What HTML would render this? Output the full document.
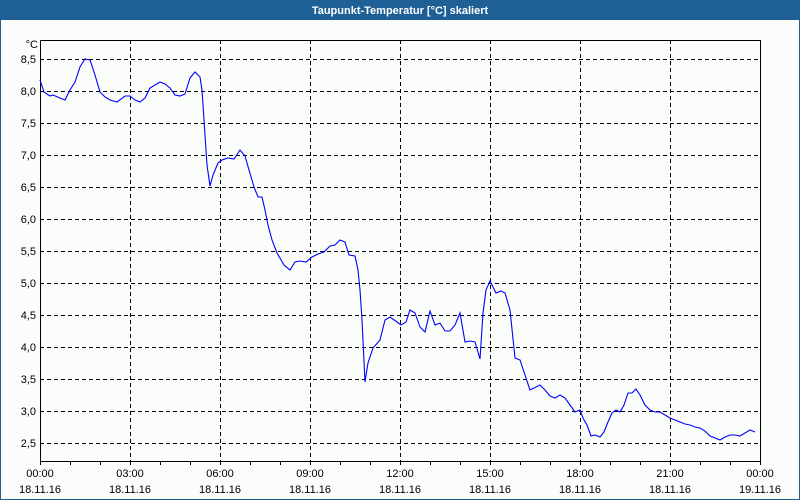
<!DOCTYPE html>
<html><head><meta charset="utf-8"><style>
html,body{margin:0;padding:0;width:800px;height:500px;overflow:hidden;background:#fff}
</style></head><body>
<svg width="800" height="500" xmlns="http://www.w3.org/2000/svg" font-family="Liberation Sans, sans-serif" font-size="11">
<rect x="0" y="0" width="800" height="500" fill="#1e6096"/>
<rect x="1" y="20" width="798" height="479" fill="#fafdfa"/>
<text x="400" y="14" fill="#fff" font-weight="bold" text-anchor="middle">Taupunkt-Temperatur [°C] skaliert</text>
<g stroke="#000" stroke-width="1" stroke-dasharray="4,3" shape-rendering="crispEdges">
<line x1="40" y1="59.5" x2="760" y2="59.5"/><line x1="40" y1="91.5" x2="760" y2="91.5"/>
<line x1="40" y1="123.5" x2="760" y2="123.5"/><line x1="40" y1="155.5" x2="760" y2="155.5"/>
<line x1="40" y1="187.5" x2="760" y2="187.5"/><line x1="40" y1="219.5" x2="760" y2="219.5"/>
<line x1="40" y1="251.5" x2="760" y2="251.5"/><line x1="40" y1="283.5" x2="760" y2="283.5"/>
<line x1="40" y1="315.5" x2="760" y2="315.5"/><line x1="40" y1="347.5" x2="760" y2="347.5"/>
<line x1="40" y1="379.5" x2="760" y2="379.5"/><line x1="40" y1="411.5" x2="760" y2="411.5"/>
<line x1="40" y1="443.5" x2="760" y2="443.5"/>
<line x1="130.5" y1="40" x2="130.5" y2="461"/><line x1="220.5" y1="40" x2="220.5" y2="461"/>
<line x1="310.5" y1="40" x2="310.5" y2="461"/><line x1="400.5" y1="40" x2="400.5" y2="461"/>
<line x1="490.5" y1="40" x2="490.5" y2="461"/><line x1="580.5" y1="40" x2="580.5" y2="461"/>
<line x1="670.5" y1="40" x2="670.5" y2="461"/>
</g>
<g stroke="#000" stroke-width="1" shape-rendering="crispEdges">
<polyline fill="none" points="40.5,40.5 760.5,40.5 760.5,461.5 40.5,461.5 40.5,40.5"/>
<path d="M40.5 461v4M70.5 461v4M100.5 461v4M130.5 461v4M160.5 461v4M190.5 461v4M220.5 461v4M250.5 461v4M280.5 461v4M310.5 461v4M340.5 461v4M370.5 461v4M400.5 461v4M430.5 461v4M460.5 461v4M490.5 461v4M520.5 461v4M550.5 461v4M580.5 461v4M610.5 461v4M640.5 461v4M670.5 461v4M700.5 461v4M730.5 461v4M760.5 461v4"/>
</g>
<g fill="#000" text-anchor="end">
<text x="38" y="48">°C</text>
<text x="36" y="63">8,5</text><text x="36" y="95">8,0</text><text x="36" y="127">7,5</text>
<text x="36" y="159">7,0</text><text x="36" y="191">6,5</text><text x="36" y="223">6,0</text>
<text x="36" y="255">5,5</text><text x="36" y="287">5,0</text><text x="36" y="319">4,5</text>
<text x="36" y="351">4,0</text><text x="36" y="383">3,5</text><text x="36" y="415">3,0</text>
<text x="36" y="447">2,5</text>
</g>
<g fill="#000" text-anchor="middle">
<text x="40" y="477">00:00</text><text x="130" y="477">03:00</text><text x="220" y="477">06:00</text>
<text x="310" y="477">09:00</text><text x="400" y="477">12:00</text><text x="490" y="477">15:00</text>
<text x="580" y="477">18:00</text><text x="670" y="477">21:00</text><text x="760" y="477">00:00</text>
<text x="40" y="493">18.11.16</text><text x="130" y="493">18.11.16</text><text x="220" y="493">18.11.16</text>
<text x="310" y="493">18.11.16</text><text x="400" y="493">18.11.16</text><text x="490" y="493">18.11.16</text>
<text x="580" y="493">18.11.16</text><text x="670" y="493">18.11.16</text><text x="760" y="493">19.11.16</text>
</g>
<polyline fill="none" stroke="#0000ff" stroke-width="1.1" points="40,80 44,92 50,96 53,95 60,98 65,100 70,90 75,82 80,67 85,59 90,60 95,75 100,92 105,97 110,100 117,102 125,96 130,96 135,100 140,102 145,98 150,88 155,85 160,82 165,84 170,88 175,95 180,96 185,94 190,78 195,72 200,77 202,90 204,120 206,150 207,165 210,186 213,175 218,163 222,160 228,158 234,159 240,150 245,156 249,170 254,187 258,197 262,197 265,210 268,225 272,240 277,253 284,265 290,270 295,262 300,261 306,262 312,257 318,254 324,252 330,246 335,245 340,240 345,242 349,255 355,256 358,270 360,290 362,320 365,382 368,363 373,348 380,340 385,320 390,317 397,322 401,325 406,322 410,310 415,313 420,327 425,332 430,311 435,325 440,323 445,331 450,331 455,325 460,313 465,342 470,341 475,342 480,359 483,313 486,290 490,281 496,293 501,291 505,293 510,310 515,358 520,360 525,375 530,390 534,388 540,385 545,390 550,396 555,398 560,395 565,398 570,405 575,412 580,410 583,418 587,425 591,436 595,435 600,437 604,432 608,422 612,413 616,410 620,412 624,405 628,393 632,393 636,389 640,395 645,405 650,410 655,412 660,412 665,415 670,418 675,420 680,422 685,424 690,425 695,427 700,428 705,431 710,436 715,438 720,440 725,437 730,435 735,435 740,436 745,433 750,430 755,432"/>
</svg>
</body></html>
